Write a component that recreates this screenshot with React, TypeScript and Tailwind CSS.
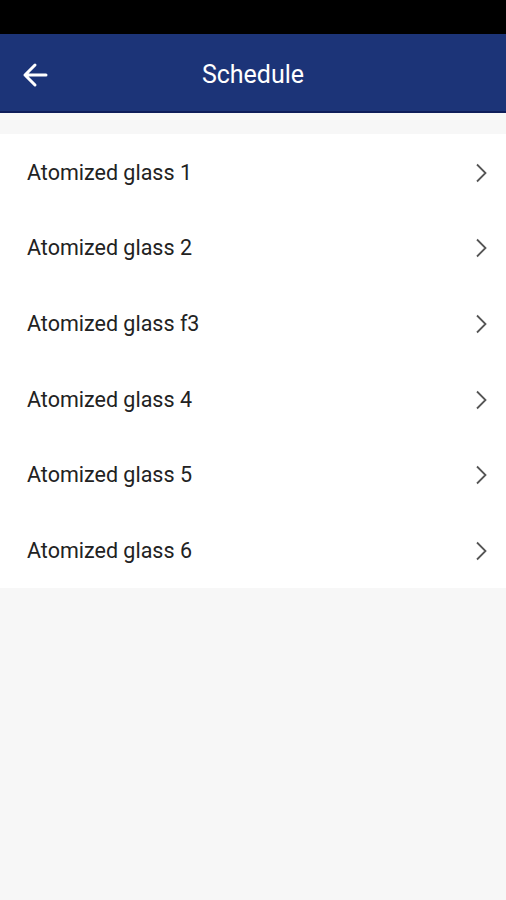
const items = [
  "Atomized glass 1",
  "Atomized glass 2",
  "Atomized glass f3",
  "Atomized glass 4",
  "Atomized glass 5",
  "Atomized glass 6",
];

function BackArrow() {
  return (
    <svg width="26" height="26" viewBox="0 0 26 26" fill="none">
      <path
        d="M24 13H3M13 3L3 13l10 10"
        stroke="white"
        strokeWidth="3"
        strokeLinecap="round"
        strokeLinejoin="round"
      />
    </svg>
  );
}

function Chevron() {
  return (
    <svg width="12" height="20" viewBox="0 0 12 20" fill="none">
      <path d="M2 1.5l8.5 8.5L2 18.5" stroke="#555" strokeWidth="1.8" />
    </svg>
  );
}

export default function App() {
  return (
    <div
      className="flex min-h-[900px] flex-col bg-[#f7f7f7]"
      style={{ fontFamily: "Roboto, 'Noto Sans', sans-serif" }}
    >
      <div className="h-[34px] bg-black" />

      {/* header */}
      <header className="relative flex h-[79px] items-center justify-center border-b-2 border-[#0e1d5a] bg-[#1c3478] pt-[4px]">
        <button className="absolute left-[22px] top-[28px]">
          <BackArrow />
        </button>
        <h1 className="text-[25px] text-white">Schedule</h1>
      </header>

      <ul className="mt-[21px] bg-white">
        {items.map((name) => (
          <li
            key={name}
            className="flex h-[75.67px] items-center justify-between pl-[27px] pr-[19px] pt-[2px]"
          >
            <span className="text-[21.5px] text-[#222]">{name}</span>
            <Chevron />
          </li>
        ))}
      </ul>
    </div>
  );
}
